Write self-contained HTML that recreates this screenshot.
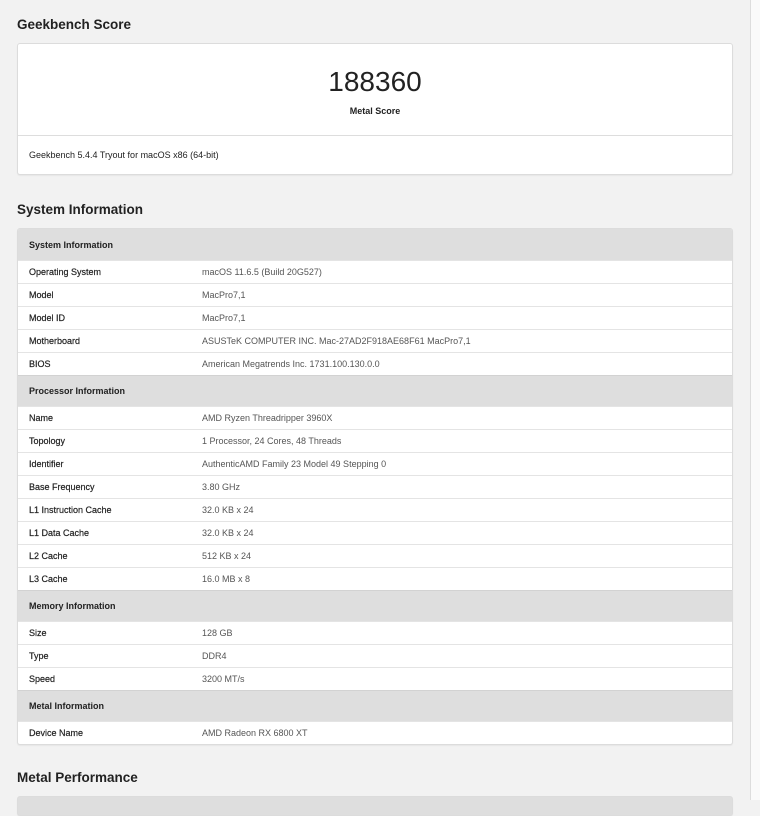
<!DOCTYPE html>
<html><head><meta charset="utf-8"><style>
*{margin:0;padding:0;box-sizing:border-box}
body{width:760px;height:800px;overflow:hidden;background:#f2f2f2;font-family:"Liberation Sans",Arial,sans-serif;color:#222;position:relative}
.sb{position:absolute;left:750px;top:0;width:10px;height:800px;background:#fafafa;border-left:1px solid #ddd}
h2{position:absolute;left:17px;font-size:13.5px;font-weight:bold;color:#222}
.card{position:absolute;left:17px;width:716px;background:#fff;border:1px solid #dcdcdc;border-radius:3px;box-shadow:0 1px 1px rgba(0,0,0,.05)}
.score{font-size:28px;text-align:center;position:absolute;width:100%;top:22px;color:#222}
.ml{font-size:9px;font-weight:bold;text-align:center;position:absolute;width:100%;top:62px}
.div{position:absolute;left:0;right:0;top:91px;border-top:1px solid #ddd}
.ver{position:absolute;left:11px;top:106px;font-size:9px}
.row{height:23px;border-top:1px solid #e4e4e4;font-size:9px;display:flex;align-items:center;position:relative}
.row:first-child{border-top:none}
.row .k{position:absolute;left:11px;font-weight:bold;color:#222;font-weight:normal;-webkit-text-stroke:0.2px #222}
.row .v{position:absolute;left:184px;color:#555}
.hd{height:31px;background:#dedede;font-weight:bold;font-size:9px;display:flex;align-items:center;padding-left:11px;border-top:1px solid #d2d2d2}
.hd:first-child{border-top:none}
</style></head><body>
<div class="sb"></div>
<h2 style="top:17px">Geekbench Score</h2>
<div class="card" style="top:43px;height:132px">
<div class="score">188360</div>
<div class="ml">Metal Score</div>
<div class="div"></div>
<div class="ver">Geekbench 5.4.4 Tryout for macOS x86 (64-bit)</div>
</div>
<h2 style="top:202px">System Information</h2>
<div class="card" style="top:228px;overflow:hidden">
<div class="hd">System Information</div>
<div class="row"><span class="k">Operating System</span><span class="v">macOS 11.6.5 (Build 20G527)</span></div>
<div class="row"><span class="k">Model</span><span class="v">MacPro7,1</span></div>
<div class="row"><span class="k">Model ID</span><span class="v">MacPro7,1</span></div>
<div class="row"><span class="k">Motherboard</span><span class="v">ASUSTeK COMPUTER INC. Mac-27AD2F918AE68F61 MacPro7,1</span></div>
<div class="row"><span class="k">BIOS</span><span class="v">American Megatrends Inc. 1731.100.130.0.0</span></div>
<div class="hd">Processor Information</div>
<div class="row"><span class="k">Name</span><span class="v">AMD Ryzen Threadripper 3960X</span></div>
<div class="row"><span class="k">Topology</span><span class="v">1 Processor, 24 Cores, 48 Threads</span></div>
<div class="row"><span class="k">Identifier</span><span class="v">AuthenticAMD Family 23 Model 49 Stepping 0</span></div>
<div class="row"><span class="k">Base Frequency</span><span class="v">3.80 GHz</span></div>
<div class="row"><span class="k">L1 Instruction Cache</span><span class="v">32.0 KB x 24</span></div>
<div class="row"><span class="k">L1 Data Cache</span><span class="v">32.0 KB x 24</span></div>
<div class="row"><span class="k">L2 Cache</span><span class="v">512 KB x 24</span></div>
<div class="row"><span class="k">L3 Cache</span><span class="v">16.0 MB x 8</span></div>
<div class="hd">Memory Information</div>
<div class="row"><span class="k">Size</span><span class="v">128 GB</span></div>
<div class="row"><span class="k">Type</span><span class="v">DDR4</span></div>
<div class="row"><span class="k">Speed</span><span class="v">3200 MT/s</span></div>
<div class="hd">Metal Information</div>
<div class="row"><span class="k">Device Name</span><span class="v">AMD Radeon RX 6800 XT</span></div>
</div>
<h2 style="top:770px">Metal Performance</h2>
<div class="card" style="top:796px;height:20px;background:#dedede"></div>
</body></html>
